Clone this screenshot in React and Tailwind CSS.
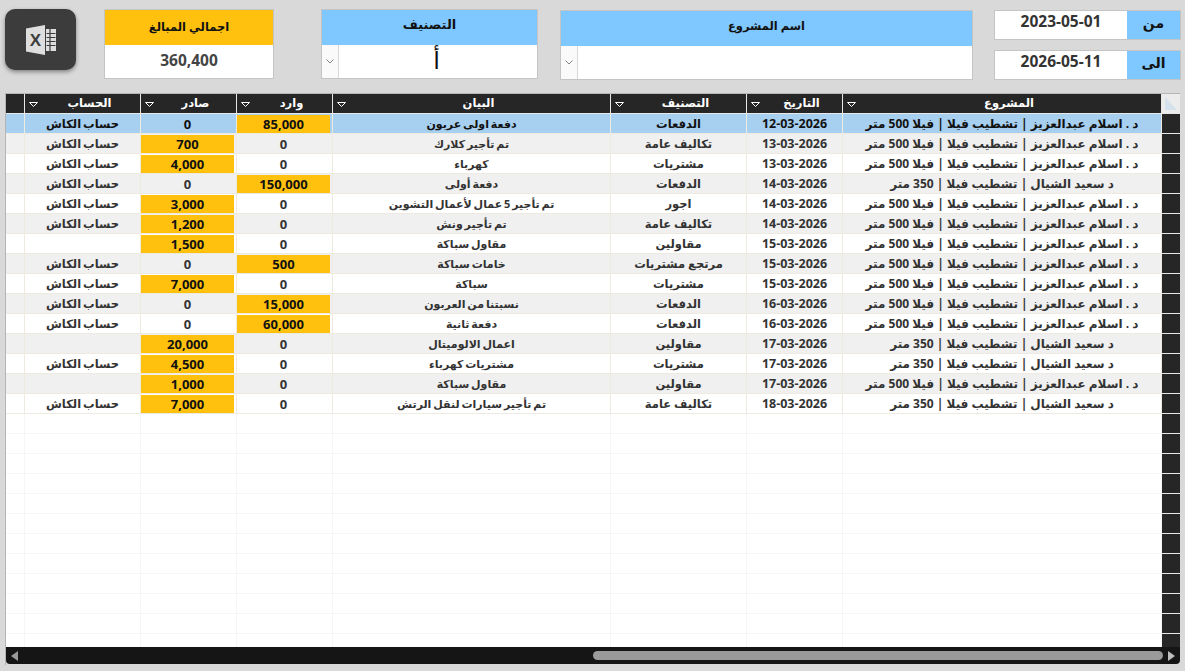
const A = "د . اسلام عبدالعزيز | تشطيب فيلا | فيلا 500 متر";
const B = "د سعيد الشيال | تشطيب فيلا | 350 متر";
const CASH = "حساب الكاش";

const rows = [
  [A, "12-03-2026", "الدفعات", "دفعة اولى عربون", "85,000", "0", CASH],
  [A, "13-03-2026", "تكاليف عامة", "تم تأجير كلارك", "0", "700", CASH],
  [A, "13-03-2026", "مشتريات", "كهرباء", "0", "4,000", CASH],
  [B, "14-03-2026", "الدفعات", "دفعة أولى", "150,000", "0", CASH],
  [A, "14-03-2026", "اجور", "تم تأجير 5 عمال لأعمال التشوين", "0", "3,000", CASH],
  [A, "14-03-2026", "تكاليف عامة", "تم تأجير ونش", "0", "1,200", CASH],
  [A, "15-03-2026", "مقاولين", "مقاول سباكة", "0", "1,500", ""],
  [A, "15-03-2026", "مرتجع مشتريات", "خامات سباكة", "500", "0", CASH],
  [A, "15-03-2026", "مشتريات", "سباكة", "0", "7,000", CASH],
  [A, "16-03-2026", "الدفعات", "نسبتنا من العربون", "15,000", "0", CASH],
  [A, "16-03-2026", "الدفعات", "دفعة ثانية", "60,000", "0", CASH],
  [B, "17-03-2026", "مقاولين", "اعمال الالوميتال", "0", "20,000", ""],
  [B, "17-03-2026", "مشتريات", "مشتريات كهرباء", "0", "4,500", CASH],
  [A, "17-03-2026", "مقاولين", "مقاول سباكة", "0", "1,000", ""],
  [B, "18-03-2026", "تكاليف عامة", "تم تأجير سيارات لنقل الرتش", "0", "7,000", CASH],
];

const headers = ["الحساب", "صادر", "وارد", "البيان", "التصنيف", "التاريخ", "المشروع"];
const gridCols = "grid grid-cols-[19px_116px_96px_96px_278px_136px_96px_319px_18px]";

const FilterMark = () => (
  <svg width="9" height="5" viewBox="0 0 9 5" className="absolute left-[4px] top-[8px]">
    <polygon points="0.5,0.5 8.5,0.5 4.5,4.5" fill="none" stroke="#fff" strokeWidth="1" />
  </svg>
);

const Chevron = () => (
  <svg width="8" height="5" viewBox="0 0 8 5">
    <path d="M0.5 0.5 L4 4 L7.5 0.5" fill="none" stroke="#777" strokeWidth="0.9" />
  </svg>
);

const ExcelIcon = () => (
  <svg width="30" height="30" viewBox="0 0 30 30">
    <polygon points="0,3.5 19,0 19,30 0,26.5" fill="#dedede" />
    <text x="9.5" y="21" textAnchor="middle" fontSize="17" fontWeight="700" fontFamily="Liberation Sans, sans-serif" fill="#3c3c3c">X</text>
    <rect x="20" y="4" width="10" height="22" fill="#dedede" />
    <path d="M20.5 8.5H29.5 M20.5 12.5H29.5 M20.5 16.5H29.5 M20.5 20.5H29.5 M24 4V26" stroke="#3c3c3c" strokeWidth="1.2" fill="none" />
  </svg>
);

const AmountCell = ({ value, bold }) => (
  <div className="h-full pt-px border-r border-[#eeeadf] text-[13px] font-bold text-[#111]">
    {value !== "0" ? (
      <div className="w-[93px] h-[18px] bg-[#ffc10e] text-center leading-[19px]">{value}</div>
    ) : (
      <div className={`w-[93px] text-center leading-[19px] ${bold ? "" : "text-[#333]"}`}>{value}</div>
    )}
  </div>
);

const Cell = ({ className, children }) => (
  <div className={`h-full border-r border-[#eeeadf] text-center whitespace-nowrap overflow-hidden ${className}`}>{children}</div>
);

const DataRow = ({ row, index }) => {
  const [project, date, category, desc, inbound, outbound, account] = row;
  const selected = index === 0;
  const bg = selected ? "bg-[#a6cff0]" : index % 2 === 1 ? "bg-[#f0f0f0]" : "bg-white";
  return (
    <div className={`${gridCols} h-5 border-b border-[#eeeadf] font-bold ${selected ? "text-[#111]" : "text-[#333]"} ${bg}`}>
      <div className="h-full border-r border-[#eeeadf]" />
      <Cell className="text-[11.5px] leading-[19px] [word-spacing:-1px]">{account}</Cell>
      <AmountCell value={outbound} bold={selected} />
      <AmountCell value={inbound} bold={selected} />
      <Cell className="text-[11px] leading-[19px] [word-spacing:-1px]">{desc}</Cell>
      <Cell className="text-[11.5px] leading-[19px]">{category}</Cell>
      <Cell className="text-[12.5px] font-bold leading-[20px]">{date}</Cell>
      <Cell className="text-[12px] leading-[19px]">{project}</Cell>
      <div className="h-5 bg-[#262626] border-b border-[#e8e8e8]" />
    </div>
  );
};

const EmptyRow = () => (
  <div className={`${gridCols} h-5 border-b border-[#f6f6f6] bg-white`}>
    {[0, 1, 2, 3, 4, 5, 6, 7].map((i) => (
      <div key={i} className="h-full border-r border-[#f6f6f6]" />
    ))}
    <div className="h-5 bg-[#262626] border-b border-[#e8e8e8]" />
  </div>
);

export default function App() {
  return (
    <div dir="ltr" className="w-[1185px] h-[671px] overflow-hidden bg-[#d9d9d9] font-['Open_Sans','DejaVu_Sans',sans-serif]">
      <div className="h-[93px] flex items-start pt-[9px] pl-[5px]">
        <button className="w-[71px] h-[61px] rounded-[10px] bg-[#3c3c3c] shadow-[0_2px_4px_rgba(0,0,0,0.4)] flex items-center justify-center">
          <ExcelIcon />
        </button>

        <div className="ml-[28px] w-[170px] h-[70px] border border-[#c4c4c4] flex flex-col">
          <div className="h-[35px] bg-[#ffc10e] text-center text-[11.5px] font-bold leading-[33px] text-[#111]">اجمالي المبالغ</div>
          <div className="flex-1 bg-white text-center text-[15.5px] font-bold leading-[31px] text-[#444]">360,400</div>
        </div>

        <div className="ml-[47px] w-[217px] h-[70px] border border-[#c4c4c4] flex flex-col">
          <div className="h-[35px] bg-[#7fc7ff] text-center text-[13px] font-semibold leading-[28px] text-[#111]">التصنيف</div>
          <div className="flex-1 bg-white flex">
            <div className="w-[17px] border-r border-[#d8d8d8] bg-[#fafafa] flex items-center justify-center"><Chevron /></div>
            <div className="flex-1 text-center text-[24px] leading-[30px] text-[#111] pr-[3px]">أ</div>
          </div>
        </div>

        <div className="ml-[22px] mt-px w-[413px] h-[70px] border border-[#c4c4c4] flex flex-col">
          <div className="h-[35px] bg-[#7fc7ff] text-center text-[11.5px] font-bold leading-[29px] text-[#111]">اسم المشروع</div>
          <div className="flex-1 bg-white flex">
            <div className="w-[17px] border-r border-[#d8d8d8] bg-[#fafafa] flex items-center justify-center"><Chevron /></div>
          </div>
        </div>

        <div className="ml-[21px] mt-px w-[187px] flex flex-col gap-[10px]">
          {[["2023-05-01", "من"], ["2026-05-11", "الى"]].map(([date, label]) => (
            <div key={label} className="h-[30px] border border-[#c4c4c4] flex">
              <div className="w-[132px] bg-white text-center text-[15.5px] font-bold leading-[21px] text-[#333]">{date}</div>
              <div className="flex-1 bg-[#7fc7ff] text-center text-[14px] font-semibold leading-[24px] text-[#111]">{label}</div>
            </div>
          ))}
        </div>
      </div>

      <div className="ml-[5px] w-[1175px] h-[572px] border-l border-t border-[#b5b5b5] flex flex-col">
        <div className={`${gridCols} h-5 bg-[#262626] border-b border-[#e8e8e8] text-white text-[11.5px] font-bold shrink-0`}>
          <div className="border-r border-[#e8e8e8]" />
          {headers.map((h) => (
            <div key={h} className="relative border-r border-[#e8e8e8] text-center leading-[18px] pl-[14px]">
              <FilterMark />
              {h}
            </div>
          ))}
          <div className="relative bg-[#ececec] h-[19px] overflow-hidden">
            <svg width="18" height="19" viewBox="0 0 18 19" className="absolute inset-0">
              <polygon points="3,3 15,16 3,16" fill="#d5e2ee" />
            </svg>
          </div>
        </div>

        <div className="h-[533px] overflow-hidden shrink-0">
          {rows.map((row, i) => (
            <DataRow key={i} row={row} index={i} />
          ))}
          {Array.from({ length: 12 }, (_, i) => (
            <EmptyRow key={i} />
          ))}
        </div>

        <div className="h-[17px] bg-[#151515] rounded-b-sm flex items-center relative shrink-0">
          <svg width="8" height="10" viewBox="0 0 8 10" className="ml-[5px]">
            <polygon points="7,0 7,10 0,5" fill="#9a9a9a" />
          </svg>
          <div className="ml-[574px] w-[570px] h-[9px] rounded-full bg-[#9a9a9a]" />
          <svg width="8" height="10" viewBox="0 0 8 10" className="ml-[5px]">
            <polygon points="0,0 0,10 7,5" fill="#bdbdbd" />
          </svg>
        </div>
      </div>
    </div>
  );
}
